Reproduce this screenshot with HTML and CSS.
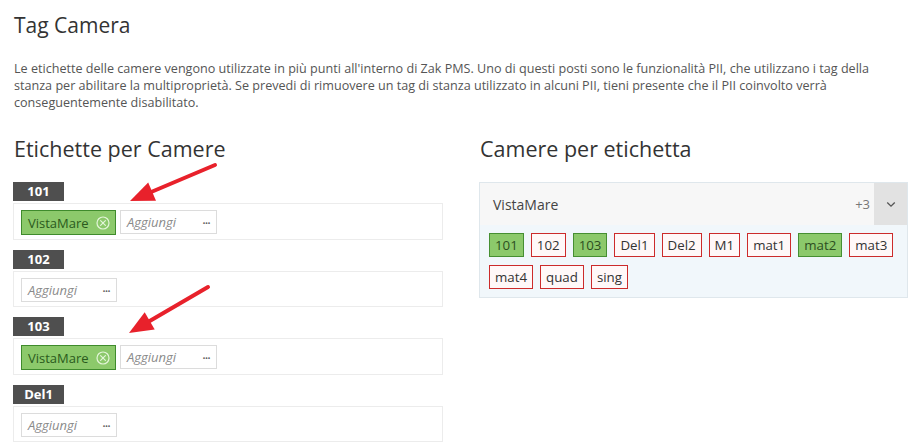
FILE: index.html
```html
<!DOCTYPE html>
<html lang="it">
<head>
<meta charset="utf-8">
<title>Tag Camera</title>
<link rel="stylesheet" href="styles.css">
</head>
<body>
<div class="page">
  <h1 class="title">Tag Camera</h1>
  <p class="intro">Le etichette delle camere vengono utilizzate in più punti all'interno di Zak PMS. Uno di questi posti sono le funzionalità PII, che utilizzano i tag della stanza per abilitare la multiproprietà. Se prevedi di rimuovere un tag di stanza utilizzato in alcuni PII, tieni presente che il PII coinvolto verrà conseguentemente disabilitato.</p>

  <div class="columns">
    <section class="col">
      <h2 class="subtitle">Etichette per Camere</h2>

      <div class="room">
        <div class="room-label">101</div>
        <div class="room-tags">
          <span class="tag-chip">VistaMare
            <svg class="chip-x" viewBox="0 0 14 14" width="14" height="14"><circle cx="7" cy="7" r="6" fill="none" stroke="#e3f5d8" stroke-width="1.2"/><path d="M4.6 4.6 L9.4 9.4 M9.4 4.6 L4.6 9.4" stroke="#e3f5d8" stroke-width="1.2" stroke-linecap="round"/></svg>
          </span>
          <span class="add-box"><span class="add-ph">Aggiungi</span><span class="dots">•••</span></span>
        </div>
      </div>

      <div class="room">
        <div class="room-label">102</div>
        <div class="room-tags">
          <span class="add-box narrow"><span class="add-ph">Aggiungi</span><span class="dots">•••</span></span>
        </div>
      </div>

      <div class="room">
        <div class="room-label">103</div>
        <div class="room-tags">
          <span class="tag-chip">VistaMare
            <svg class="chip-x" viewBox="0 0 14 14" width="14" height="14"><circle cx="7" cy="7" r="6" fill="none" stroke="#e3f5d8" stroke-width="1.2"/><path d="M4.6 4.6 L9.4 9.4 M9.4 4.6 L4.6 9.4" stroke="#e3f5d8" stroke-width="1.2" stroke-linecap="round"/></svg>
          </span>
          <span class="add-box"><span class="add-ph">Aggiungi</span><span class="dots">•••</span></span>
        </div>
      </div>

      <div class="room">
        <div class="room-label">Del1</div>
        <div class="room-tags">
          <span class="add-box narrow"><span class="add-ph">Aggiungi</span><span class="dots">•••</span></span>
        </div>
      </div>
    </section>

    <section class="col">
      <h2 class="subtitle">Camere per etichetta</h2>
      <div class="panel">
        <div class="panel-head">
          <span class="panel-name">VistaMare</span>
          <span class="panel-count">+3</span>
          <span class="panel-toggle">
            <svg viewBox="0 0 12 8" width="10" height="7"><path d="M1.5 1.5 L6 6 L10.5 1.5" fill="none" stroke="#555" stroke-width="1.6"/></svg>
          </span>
        </div>
        <div class="panel-body">
          <span class="room-chip on">101</span>
          <span class="room-chip">102</span>
          <span class="room-chip on">103</span>
          <span class="room-chip">Del1</span>
          <span class="room-chip">Del2</span>
          <span class="room-chip">M1</span>
          <span class="room-chip">mat1</span>
          <span class="room-chip on">mat2</span>
          <span class="room-chip">mat3</span>
          <span class="room-chip">mat4</span>
          <span class="room-chip">quad</span>
          <span class="room-chip">sing</span>
        </div>
      </div>
    </section>
  </div>

  <svg class="arrows" width="916" height="443" viewBox="0 0 916 443">
    <line x1="215" y1="165" x2="150" y2="192.5" stroke="#e8212b" stroke-width="4" stroke-linecap="round"/>
    <polygon points="130,201 156,200.8 148.2,182.4" fill="#e8212b"/>
    <line x1="208" y1="287" x2="148" y2="322" stroke="#e8212b" stroke-width="4" stroke-linecap="round"/>
    <polygon points="129,333 154.7,329.5 144.7,312.3" fill="#e8212b"/>
  </svg>
</div>
</body>
</html>
```

FILE: styles.css
```css
html, body {
  margin: 0;
  padding: 0;
  background: #ffffff;
}

body {
  font-family: "Open Sans", "Liberation Sans", sans-serif;
  color: #333;
}

.page {
  position: relative;
  padding: 0 8px 0 13px;
  height: 443px;
  overflow: hidden;
}

.title {
  margin: 10px 0 0 1px;
  font-size: 21px;
  line-height: 30px;
  font-weight: 400;
  color: #333;
}

.intro {
  margin: 20px 0 0 1px;
  font-size: 12.6px;
  line-height: 17px;
  color: #555;
}

.columns {
  display: grid;
  grid-template-columns: 430px 429px;
  column-gap: 36px;
  margin-top: 25px;
}

.subtitle {
  margin: 0 0 20px 1px;
  font-size: 21.5px;
  line-height: 26px;
  font-weight: 400;
  color: #333;
}

.room {
  margin-bottom: 10px;
}

.room-label {
  width: 51px;
  height: 19px;
  line-height: 19px;
  background: #4f4f4f;
  color: #fff;
  font-weight: 700;
  font-size: 13px;
  text-align: center;
  margin-bottom: 2px;
}

.room-tags {
  display: flex;
  align-items: flex-start;
  gap: 4px;
  border: 1px solid #ececec;
  padding: 6px 7px 4px;
}

.tag-chip {
  display: inline-flex;
  align-items: center;
  justify-content: space-between;
  box-sizing: border-box;
  width: 95px;
  height: 25px;
  padding: 0 5px 0 6px;
  background: #8cc96b;
  border: 1px solid #3f8b2c;
  color: #2a5a1c;
  font-size: 13px;
}

.chip-x {
  display: block;
}

.add-box {
  display: inline-flex;
  align-items: center;
  justify-content: space-between;
  box-sizing: border-box;
  width: 97px;
  height: 24px;
  padding: 0 6px 0 6px;
  border: 1px solid #dcdcdc;
  background: #fff;
}

.add-box.narrow {
  width: 96px;
}

.add-ph {
  font-style: italic;
  font-size: 13px;
  color: #8a8a8a;
}

.dots {
  font-size: 8px;
  color: #666;
  letter-spacing: -0.5px;
}

.panel {
  border: 1px solid #dfe7ec;
}

.panel-head {
  display: flex;
  align-items: stretch;
  height: 42px;
  background: #f7f7f7;
}

.panel-name {
  flex: 1;
  display: flex;
  align-items: center;
  padding-left: 13px;
  font-size: 14px;
  color: #444;
}

.panel-count {
  display: flex;
  align-items: center;
  padding-right: 4px;
  font-size: 13px;
  color: #777;
}

.panel-toggle {
  width: 33px;
  display: flex;
  align-items: center;
  justify-content: center;
  background: #e2e2e2;
}

.panel-body {
  display: flex;
  flex-wrap: wrap;
  column-gap: 7px;
  row-gap: 8px;
  padding: 8px 9px 8px;
  background: #f1f7fb;
}

.room-chip {
  box-sizing: border-box;
  height: 24px;
  line-height: 22px;
  padding: 0 5px;
  border: 1px solid #cc2b2b;
  background: #fff8f8;
  color: #333;
  font-size: 13.3px;
}

.room-chip.on {
  background: #8cc96b;
  border-color: #468f32;
  color: #2c4f1f;
}

.arrows {
  position: absolute;
  left: 0;
  top: 0;
  pointer-events: none;
}
```
